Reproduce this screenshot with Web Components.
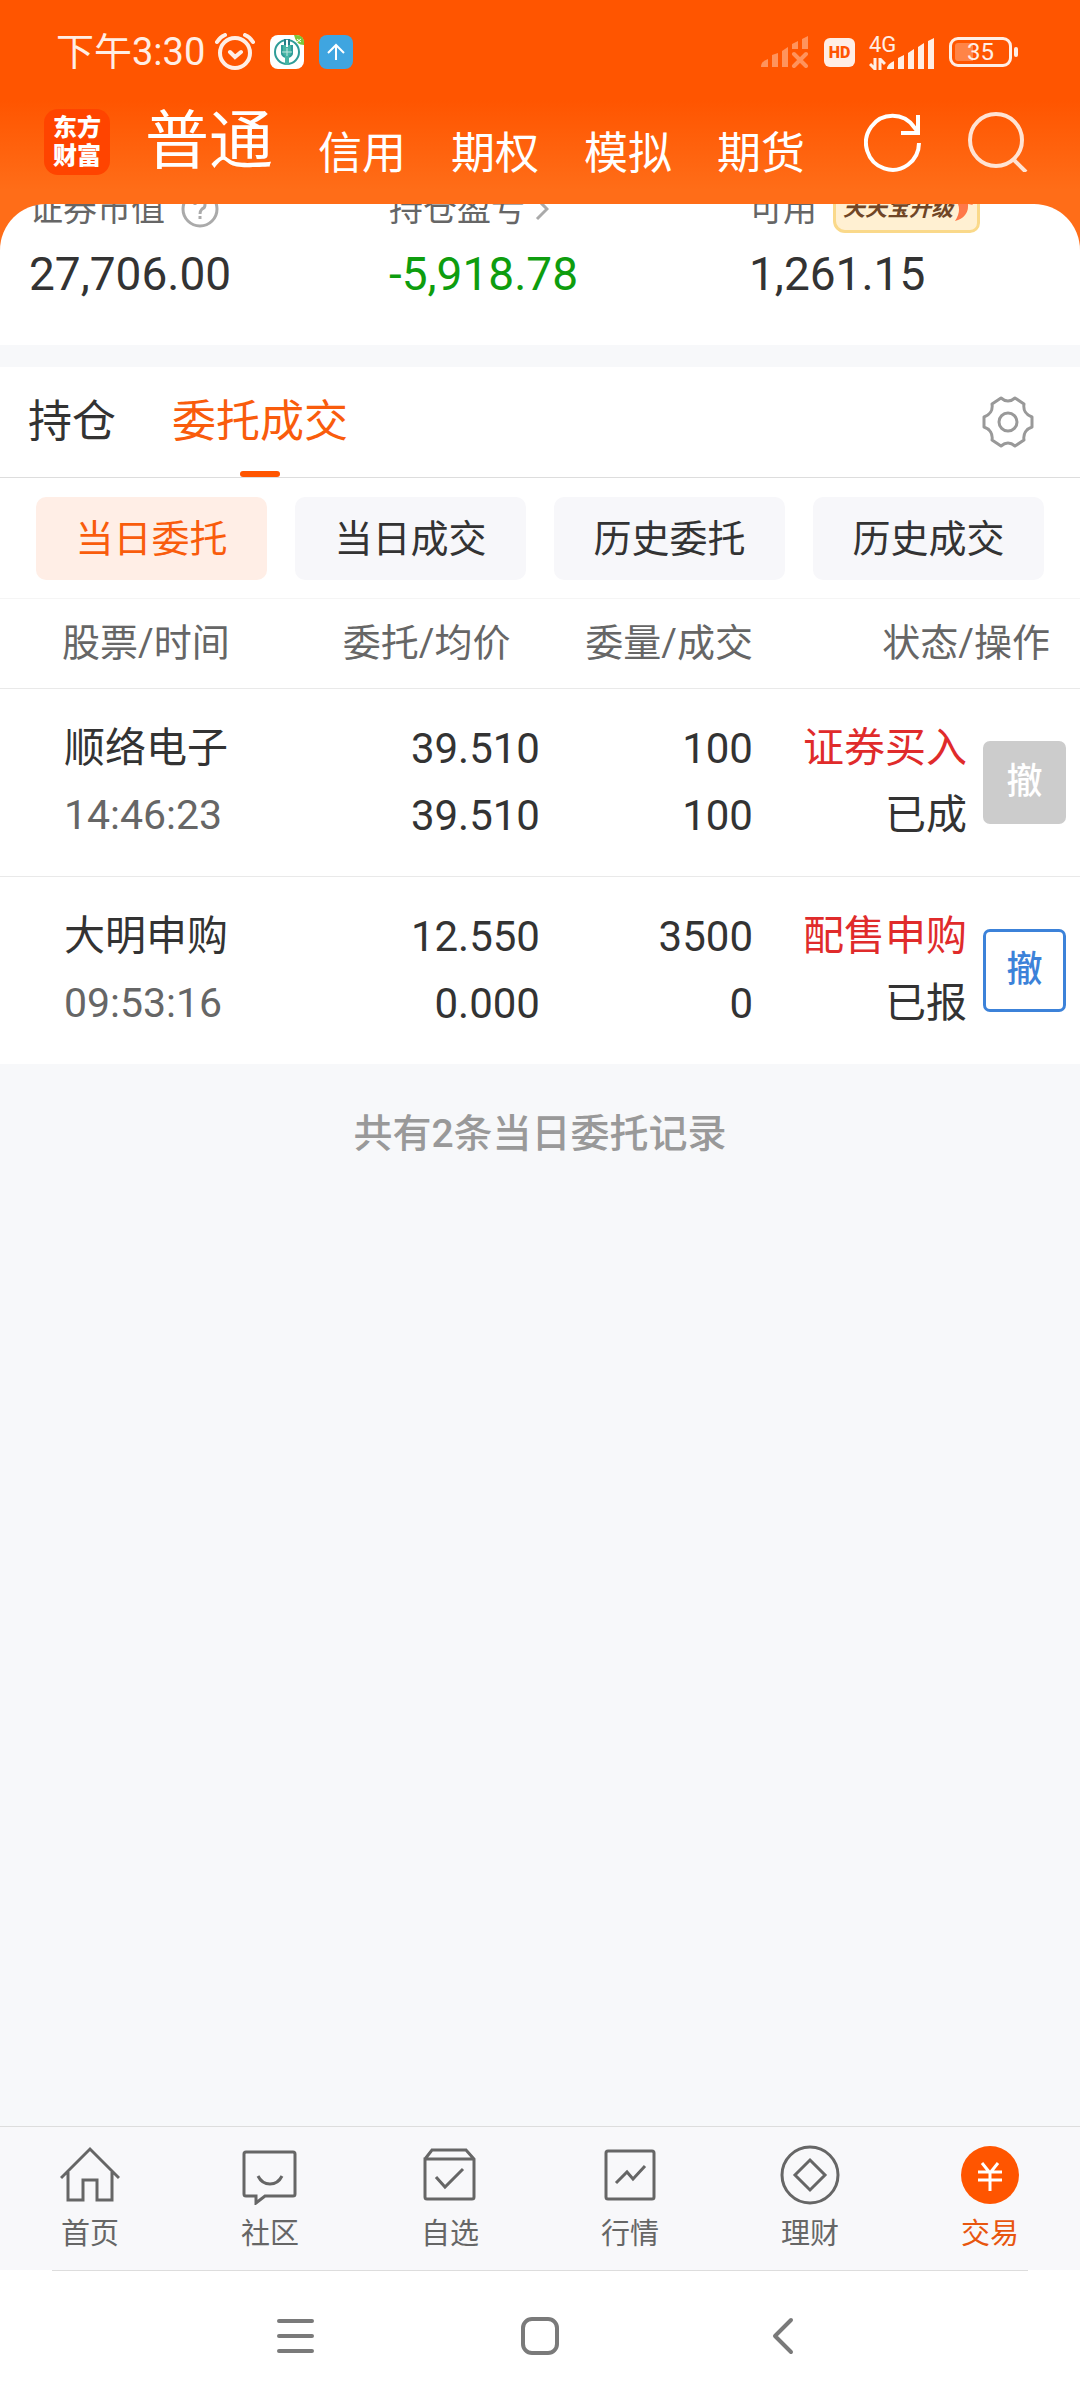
<!DOCTYPE html>
<html lang="zh-CN">
<head>
<meta charset="utf-8">
<meta name="viewport" content="width=device-width, initial-scale=1">
<title>委托成交</title>
<style>
    body {
        margin: 0;
        font-family: Roboto, "Noto Sans CJK SC", sans-serif;
        color: #333;
        background: #f7f8fa;
    }
</style>
</head>
<body>
<trade-app></trade-app>

<script>
// Shared by every element: open shadow root + box reset
class BaseElement extends HTMLElement {
    connectedCallback() {
        if (this.shadowRoot) return;
        this.attachShadow({ mode: 'open' });
        this.shadowRoot.innerHTML = `
            <style>
                :host { display: block; }
                * { box-sizing: border-box; }
                button {
                    font: inherit;
                    color: inherit;
                    background: none;
                    border: 0;
                    padding: 0;
                    margin: 0;
                }
                a { color: inherit; text-decoration: none; }
                svg { display: block; flex: none; }
            </style>
            ${this.render()}
        `;
    }
}

class StatusBar extends BaseElement {
    render() {
        return `
            <style>
                :host {
                    display: flex;
                    align-items: center;
                    justify-content: space-between;
                    height: 104px;
                    padding: 0 62px 0 56px;
                    color: #ffeee5;
                }
                .side { display: flex; align-items: center; }
                .left { gap: 15px; }
                .right { gap: 14px; }
                .clock { display: flex; align-items: center; gap: 10px; font-size: 38px; line-height: 44px; }
                .hd {
                    width: 31px;
                    height: 29px;
                    border-radius: 6px;
                    background: #ffeee5;
                    color: #ff5500;
                    font-size: 16px;
                    font-weight: 900;
                    line-height: 29px;
                    text-align: center;
                }
                .mobile { display: flex; align-items: flex-end; }
                .net { display: flex; flex-direction: column; width: 18px; font-size: 22px; line-height: 22px; gap: 2px; }
                .battery { display: flex; align-items: center; gap: 2px; }
                .cell {
                    width: 63px;
                    height: 30px;
                    border: 3px solid #ffeee5;
                    border-radius: 9px;
                    padding: 3px;
                }
                .level {
                    width: 51px;
                    height: 18px;
                    border-radius: 3px;
                    background: linear-gradient(90deg, #ff8447 35%, transparent 35%);
                    font-size: 24px;
                    line-height: 18px;
                    text-align: center;
                }
                .nub { width: 4px; height: 10px; border-radius: 2px; background: #ffeee5; }
            </style>
            <div class="side left">
                <div class="clock">
                    <span>下午3:30</span>
                    <svg width="40" height="38" viewBox="0 0 40 38" fill="none" stroke="#ffeee5" stroke-width="4" stroke-linecap="round">
                        <circle cx="20" cy="20" r="15"/>
                        <path d="M15 19l5 5 6-5M2 9q3-5 8-7M38 9q-3-5-8-7"/>
                    </svg>
                </div>
                <svg width="34" height="34" viewBox="0 0 34 34">
                    <rect width="34" height="34" rx="8" fill="#fff"/>
                    <path d="M24 0h2q8 0 8 8v2q-8 0-10-10z" fill="#7cc63a"/>
                    <path d="M27 4l4 3M27 7l4-3" stroke="#fff"/>
                    <circle cx="17" cy="17" r="12" fill="none" stroke="#2f9c98" stroke-width="2"/>
                    <path d="M15 4v9M19 4v9" stroke="#267f8a" stroke-width="2"/>
                    <path d="M12 10v9q1 3 5 3t5-3v-9" fill="#48b5a5" stroke="#2f9c98" stroke-width="2"/>
                    <path d="M17 5v7" stroke="#fff" stroke-width="2"/>
                    <path d="M12 17h10M17 13v8" stroke="#bfe6e0"/>
                    <path d="M17 21v9" stroke="#48b5a5" stroke-width="4"/>
                </svg>
                <svg width="34" height="34" viewBox="0 0 34 34">
                    <rect width="34" height="34" rx="8" fill="#3fa5e0"/>
                    <path d="M17 25V10M9 18l8-8 8 8" fill="none" stroke="#fff" stroke-width="2"/>
                </svg>
            </div>
            <div class="side right">
                <svg width="50" height="32" viewBox="0 0 50 32" fill="#ff935c">
                    <path d="M1 31q0-6 7-8v8zM12 31V19l6-2v14zM22 31V15l6-4v20zM32 13V8l6-3v8zM42 13V3l6-3v13z"/>
                    <path d="M34 18l12 12M46 18L34 30" stroke="#ff935c" stroke-width="4" stroke-linecap="round"/>
                </svg>
                <span class="hd">HD</span>
                <div class="mobile">
                    <div class="net">
                        <span>4G</span>
                        <svg width="17" height="12" viewBox="0 0 17 12" fill="none" stroke="#ffeee5" stroke-width="3">
                            <path d="M6 0v11L1 6M11 12V1l5 5"/>
                        </svg>
                    </div>
                    <svg width="48" height="32" viewBox="0 0 48 32" fill="#ffeee5">
                        <path d="M0 31q0-5 7-8v8zM11 31V20l6-3v14zM21 31V15l6-4v20zM31 31V9l6-4v26zM41 31V3l6-3v31z"/>
                    </svg>
                </div>
                <div class="battery">
                    <div class="cell"><div class="level">35</div></div>
                    <span class="nub"></span>
                </div>
            </div>
        `;
    }
}

class AccountNav extends BaseElement {
    render() {
        return `
            <style>
                :host {
                    display: flex;
                    align-items: center;
                    justify-content: space-between;
                    padding: 0 52px 24px 44px;
                    color: #fff;
                }
                .logo {
                    width: 66px;
                    height: 66px;
                    padding: 5px 0;
                    border-radius: 14px;
                    background: #ff4400;
                    font-size: 24px;
                    font-weight: 900;
                    line-height: 28px;
                    text-align: center;
                }
                .group { display: flex; align-items: center; gap: 35px; }
                .accounts { display: flex; align-items: flex-end; gap: 45px; font-size: 44px; line-height: 52px; }
                .accounts .current { font-size: 64px; line-height: 76px; }
                .actions { display: flex; gap: 46px; }
            </style>
            <div class="group">
                <div class="logo">东方<br>财富</div>
                <nav class="accounts">
                    <a class="current" href="#normal">普通</a>
                    <a href="#credit">信用</a>
                    <a href="#options">期权</a>
                    <a href="#demo">模拟</a>
                    <a href="#futures">期货</a>
                </nav>
            </div>
            <div class="actions">
                <button aria-label="刷新">
                    <svg width="58" height="60" viewBox="0 0 58 60" fill="none" stroke="#fff" stroke-width="4">
                        <path d="M55 31A26.500 27 0 1 1 50 15L54 20M54 3v18H37"/>
                    </svg>
                </button>
                <button aria-label="搜索">
                    <svg width="60" height="60" viewBox="0 0 60 60" fill="none" stroke="#ffe3d3" stroke-width="4">
                        <circle cx="28" cy="28" r="26"/>
                        <path d="M45 47l13 13"/>
                    </svg>
                </button>
            </div>
        `;
    }
}

class AssetSummary extends BaseElement {
    render() {
        return `
            <style>
                :host { background: #ff6d18; }
                .card {
                    height: 141px;
                    border-radius: 46px 46px 0 0;
                    background: #fff;
                    overflow: hidden;
                }
                /* the page is scrolled: the labels run under the header */
                .items { display: grid; grid-template-columns: repeat(3, 1fr); margin-top: -20px; }
            </style>
            <div class="card">
                <div class="items">
                    <asset-item label="证券市值" value="27,706.00">
                        <svg width="38" height="38" viewBox="0 0 38 38" fill="none" stroke="#aaa" stroke-width="3">
                            <circle cx="19" cy="19" r="17"/>
                            <path d="M14 15q0-5 5-5t5 5q0 3-3 4-2 2-2 5M19 26v3"/>
                        </svg>
                    </asset-item>
                    <asset-item label="持仓盈亏" value="-5,918.78" tone="down">
                        <svg width="14" height="24" viewBox="0 0 14 24" fill="none" stroke="#aaa" stroke-width="3">
                            <path d="M2 2l10 10L2 22"/>
                        </svg>
                    </asset-item>
                    <asset-item label="可用" value="1,261.15">
                        <promo-badge>天天宝升级</promo-badge>
                    </asset-item>
                </div>
            </div>
        `;
    }
}

class AssetItem extends BaseElement {
    render() {
        return `
            <style>
                :host { padding-left: 29px; }
                .label { display: flex; align-items: center; gap: 16px; height: 50px; font-size: 34px; line-height: 46px; color: #666; }
                .value { margin-top: 12px; font-size: 46px; line-height: 56px; }
                :host([tone="down"]) .value { color: #0e9d0e; }
                :host([tone="down"]) .label { gap: 10px; }
            </style>
            <div class="label"><span>${this.getAttribute('label')}</span><slot></slot></div>
            <div class="value">${this.getAttribute('value')}</div>
        `;
    }
}

class PromoBadge extends BaseElement {
    render() {
        return `
            <style>
                :host {
                    display: flex;
                    align-items: center;
                    height: 48px;
                    padding: 0 4px 0 7px;
                    border: 3px solid #fad98a;
                    border-radius: 6px 12px 10px 12px;
                    background: #fff0d2;
                    color: #704626;
                    font-size: 22px;
                    font-style: italic;
                    font-weight: 700;
                    line-height: 42px;
                    box-sizing: border-box;
                }
            </style>
            <slot></slot>
            <svg width="20" height="30" viewBox="0 0 20 30" fill="#ff7848">
                <path d="M2 5l6 3 4-8 8 11-5-1q1 13-13 17 6-9 3-17-1-3-3-5z"/>
            </svg>
        `;
    }
}

class SectionTabs extends BaseElement {
    render() {
        return `
            <style>
                :host {
                    display: flex;
                    align-items: center;
                    justify-content: space-between;
                    margin-top: 22px;
                    padding: 0 46px 0 28px;
                    border-bottom: 1px solid #ddd;
                    background: #fff;
                }
                .tabs { display: flex; gap: 56px; }
                .tabs button { position: relative; height: 110px; font-size: 44px; line-height: 52px; }
                .tabs button[aria-selected="true"] { color: #f95c0c; }
                .tabs button[aria-selected="true"]::after {
                    content: '';
                    position: absolute;
                    bottom: 0;
                    left: 50%;
                    width: 40px;
                    height: 6px;
                    margin-left: -20px;
                    border-radius: 3px;
                    background: #ff5500;
                }
            </style>
            <div class="tabs" role="tablist">
                <button role="tab" aria-selected="false">持仓</button>
                <button role="tab" aria-selected="true">委托成交</button>
            </div>
            <button aria-label="设置">
                <svg width="52" height="52" viewBox="0 0 52 52" fill="none" stroke="#999" stroke-width="3" stroke-linejoin="round">
                    <path d="M19 2q7 6 14 0l9 6c-1 6 2 11 8 13v10c-6 2-9 7-8 13l-9 6q-7-6-14 0l-9-6c1-6-2-11-8-13V21c6-2 9-7 8-13z"/>
                    <circle cx="26" cy="26" r="9"/>
                </svg>
            </button>
        `;
    }
}

class FilterBar extends BaseElement {
    render() {
        return `
            <style>
                :host {
                    display: grid;
                    grid-template-columns: repeat(4, 1fr);
                    gap: 28px;
                    padding: 19px 36px 18px;
                    border-bottom: 1px solid #f5f5f5;
                    background: #fff;
                }
                button { height: 83px; border-radius: 10px; background: #f7f7fa; font-size: 38px; line-height: 44px; }
                button[aria-pressed="true"] { background: #ffeee6; color: #f95c0c; }
            </style>
            <button aria-pressed="true">当日委托</button>
            <button aria-pressed="false">当日成交</button>
            <button aria-pressed="false">历史委托</button>
            <button aria-pressed="false">历史成交</button>
        `;
    }
}

const orders = [
    { name: '顺络电子', time: '14:46:23', price: '39.510', avg: '39.510', qty: '100', done: '100', type: '证券买入', state: '已成', open: false },
    { name: '大明申购', time: '09:53:16', price: '12.550', avg: '0.000', qty: '3500', done: '0', type: '配售申购', state: '已报', open: true }
];

class OrderTable extends BaseElement {
    render() {
        const rows = orders.map(o => `
            <tr>
                <td class="stock">${o.name}<br><span class="time">${o.time}</span></td>
                <td class="num">${o.price}<br>${o.avg}</td>
                <td class="num qty">${o.qty}<br>${o.done}</td>
                <td class="state"><span class="type">${o.type}</span><br>${o.state}</td>
                <td class="action"><button ${o.open ? '' : 'disabled'}>撤</button></td>
            </tr>
        `).join('');
        return `
            <style>
                :host { background: #fff; }
                table { width: 100%; table-layout: fixed; border-collapse: collapse; }
                th { height: 89px; padding: 0; font-size: 38px; font-weight: 400; line-height: 44px; color: #666; }
                td { height: 188px; padding: 0; border-top: 1px solid #e9e9e9; font-size: 41px; line-height: 67px; }
                .stock { padding-left: 64px; text-align: left; }
                th.stock { padding-left: 62px; }
                .time { color: #666; }
                .num { font-size: 42px; text-align: right; }
                .qty { padding-right: 3px; text-align: right; }
                .state { padding-right: 5px; text-align: right; }
                th.state { padding-right: 30px; }
                .type { color: #e02b2b; }
                .action { padding-right: 14px; text-align: right; }
                .action button {
                    width: 83px;
                    height: 83px;
                    border: 3px solid #3c82d9;
                    border-radius: 7px;
                    color: #3c82d9;
                    font-size: 36px;
                    font-weight: 500;
                    line-height: 44px;
                    vertical-align: middle;
                }
                .action button:disabled { border-color: #ccc; background: #ccc; color: #fff; }
            </style>
            <table>
                <colgroup>
                    <col style="width: 29%"><col style="width: 21%"><col style="width: 20%"><col style="width: 20%"><col style="width: 10%">
                </colgroup>
                <thead>
                    <tr>
                        <th class="stock">股票/时间</th>
                        <th>委托/均价</th>
                        <th class="qty">委量/成交</th>
                        <th class="state" colspan="2">状态/操作</th>
                    </tr>
                </thead>
                <tbody>${rows}</tbody>
            </table>
        `;
    }
}

class BottomNav extends BaseElement {
    render() {
        return `
            <style>
                :host { border-top: 1px solid #ddd; background: #f8f8fa; }
                nav { display: grid; grid-template-columns: repeat(6, 1fr); }
            </style>
            <nav>
                <nav-item label="首页" href="#home">
                    <svg viewBox="0 0 60 60"><path d="M1 33L30 4l29 29M8 27v28h15V35h14v20h15V27"/></svg>
                </nav-item>
                <nav-item label="社区" href="#community">
                    <svg viewBox="0 0 60 60"><path d="M6 7h47q2 0 2 2v40q0 2-2 2H25l-9 7v-7H6q-2 0-2-2V9q0-2 2-2z"/><path d="M18 31q4 8 12 8t12-8"/></svg>
                </nav-item>
                <nav-item label="自选" href="#watch">
                    <svg viewBox="0 0 60 60"><path d="M5 14l7-9h34l8 9v38q0 2-2 2H7q-2 0-2-2V14h49M16 32l9 10 18-18"/></svg>
                </nav-item>
                <nav-item label="行情" href="#market">
                    <svg viewBox="0 0 60 60"><rect x="6" y="6" width="48" height="48" rx="2"/><path d="M16 38l11-11 6 7 12-13"/></svg>
                </nav-item>
                <nav-item label="理财" href="#wealth">
                    <svg viewBox="0 0 60 60"><circle cx="30" cy="30" r="28"/><path d="M30 15l15 15-15 15-15-15z"/></svg>
                </nav-item>
                <nav-item label="交易" href="#trade" active>
                    <svg viewBox="0 0 60 60"><circle cx="30" cy="30" r="29" fill="#ff5500" stroke="none"/><path d="M22 18l8 10 8-10M30 28v18M18 27h24M18 35h24" stroke="#fff"/></svg>
                </nav-item>
            </nav>
        `;
    }
}

class NavItem extends BaseElement {
    render() {
        return `
            <style>
                a {
                    display: flex;
                    flex-direction: column;
                    align-items: center;
                    height: 143px;
                    padding-top: 18px;
                    gap: 9px;
                    color: #666;
                    font-size: 29px;
                    line-height: 40px;
                }
                :host([active]) a { color: #e8560f; }
                ::slotted(svg) {
                    display: block;
                    width: 60px;
                    height: 60px;
                    fill: none;
                    stroke: #666;
                    stroke-width: 3;
                }
            </style>
            <a href="${this.getAttribute('href')}"><slot></slot><span>${this.getAttribute('label')}</span></a>
        `;
    }
}

class SystemNav extends BaseElement {
    render() {
        return `
            <style>
                :host { background: #fff; }
                .line { height: 1px; margin: 0 52px; background: #ddd; }
                .keys { display: flex; align-items: center; justify-content: center; gap: 204px; height: 129px; }
                svg { fill: none; stroke: #7a7a7a; stroke-width: 4; stroke-linecap: round; stroke-linejoin: round; }
            </style>
            <div class="line"></div>
            <div class="keys">
                <button aria-label="最近任务"><svg width="40" height="40" viewBox="0 0 40 40"><path d="M3 5h33M3 20h33M3 35h33"/></svg></button>
                <button aria-label="主屏幕"><svg width="40" height="40" viewBox="0 0 40 40"><rect x="3" y="3" width="34" height="34" rx="9"/></svg></button>
                <button aria-label="返回"><svg width="40" height="40" viewBox="0 0 40 40"><path d="M27 4L11 20l16 16"/></svg></button>
            </div>
        `;
    }
}

class TradeApp extends BaseElement {
    render() {
        return `
            <style>
                :host { display: flex; flex-direction: column; min-height: 100vh; }
                header { background: linear-gradient(#ff5500 100px, #ff6d18 190px); }
                main { flex: 1; }
                .total {
                    margin: 0;
                    padding: 44px 0;
                    color: #999;
                    font-size: 39px;
                    font-weight: 500;
                    line-height: 52px;
                    text-align: center;
                }
            </style>
            <header>
                <status-bar></status-bar>
                <account-nav></account-nav>
            </header>
            <main>
                <asset-summary></asset-summary>
                <section-tabs></section-tabs>
                <filter-bar></filter-bar>
                <order-table></order-table>
                <p class="total">共有2条当日委托记录</p>
            </main>
            <bottom-nav></bottom-nav>
            <system-nav></system-nav>
        `;
    }
}

customElements.define('status-bar', StatusBar);
customElements.define('account-nav', AccountNav);
customElements.define('promo-badge', PromoBadge);
customElements.define('asset-item', AssetItem);
customElements.define('asset-summary', AssetSummary);
customElements.define('section-tabs', SectionTabs);
customElements.define('filter-bar', FilterBar);
customElements.define('order-table', OrderTable);
customElements.define('nav-item', NavItem);
customElements.define('bottom-nav', BottomNav);
customElements.define('system-nav', SystemNav);
customElements.define('trade-app', TradeApp);
</script>
</body>
</html>
